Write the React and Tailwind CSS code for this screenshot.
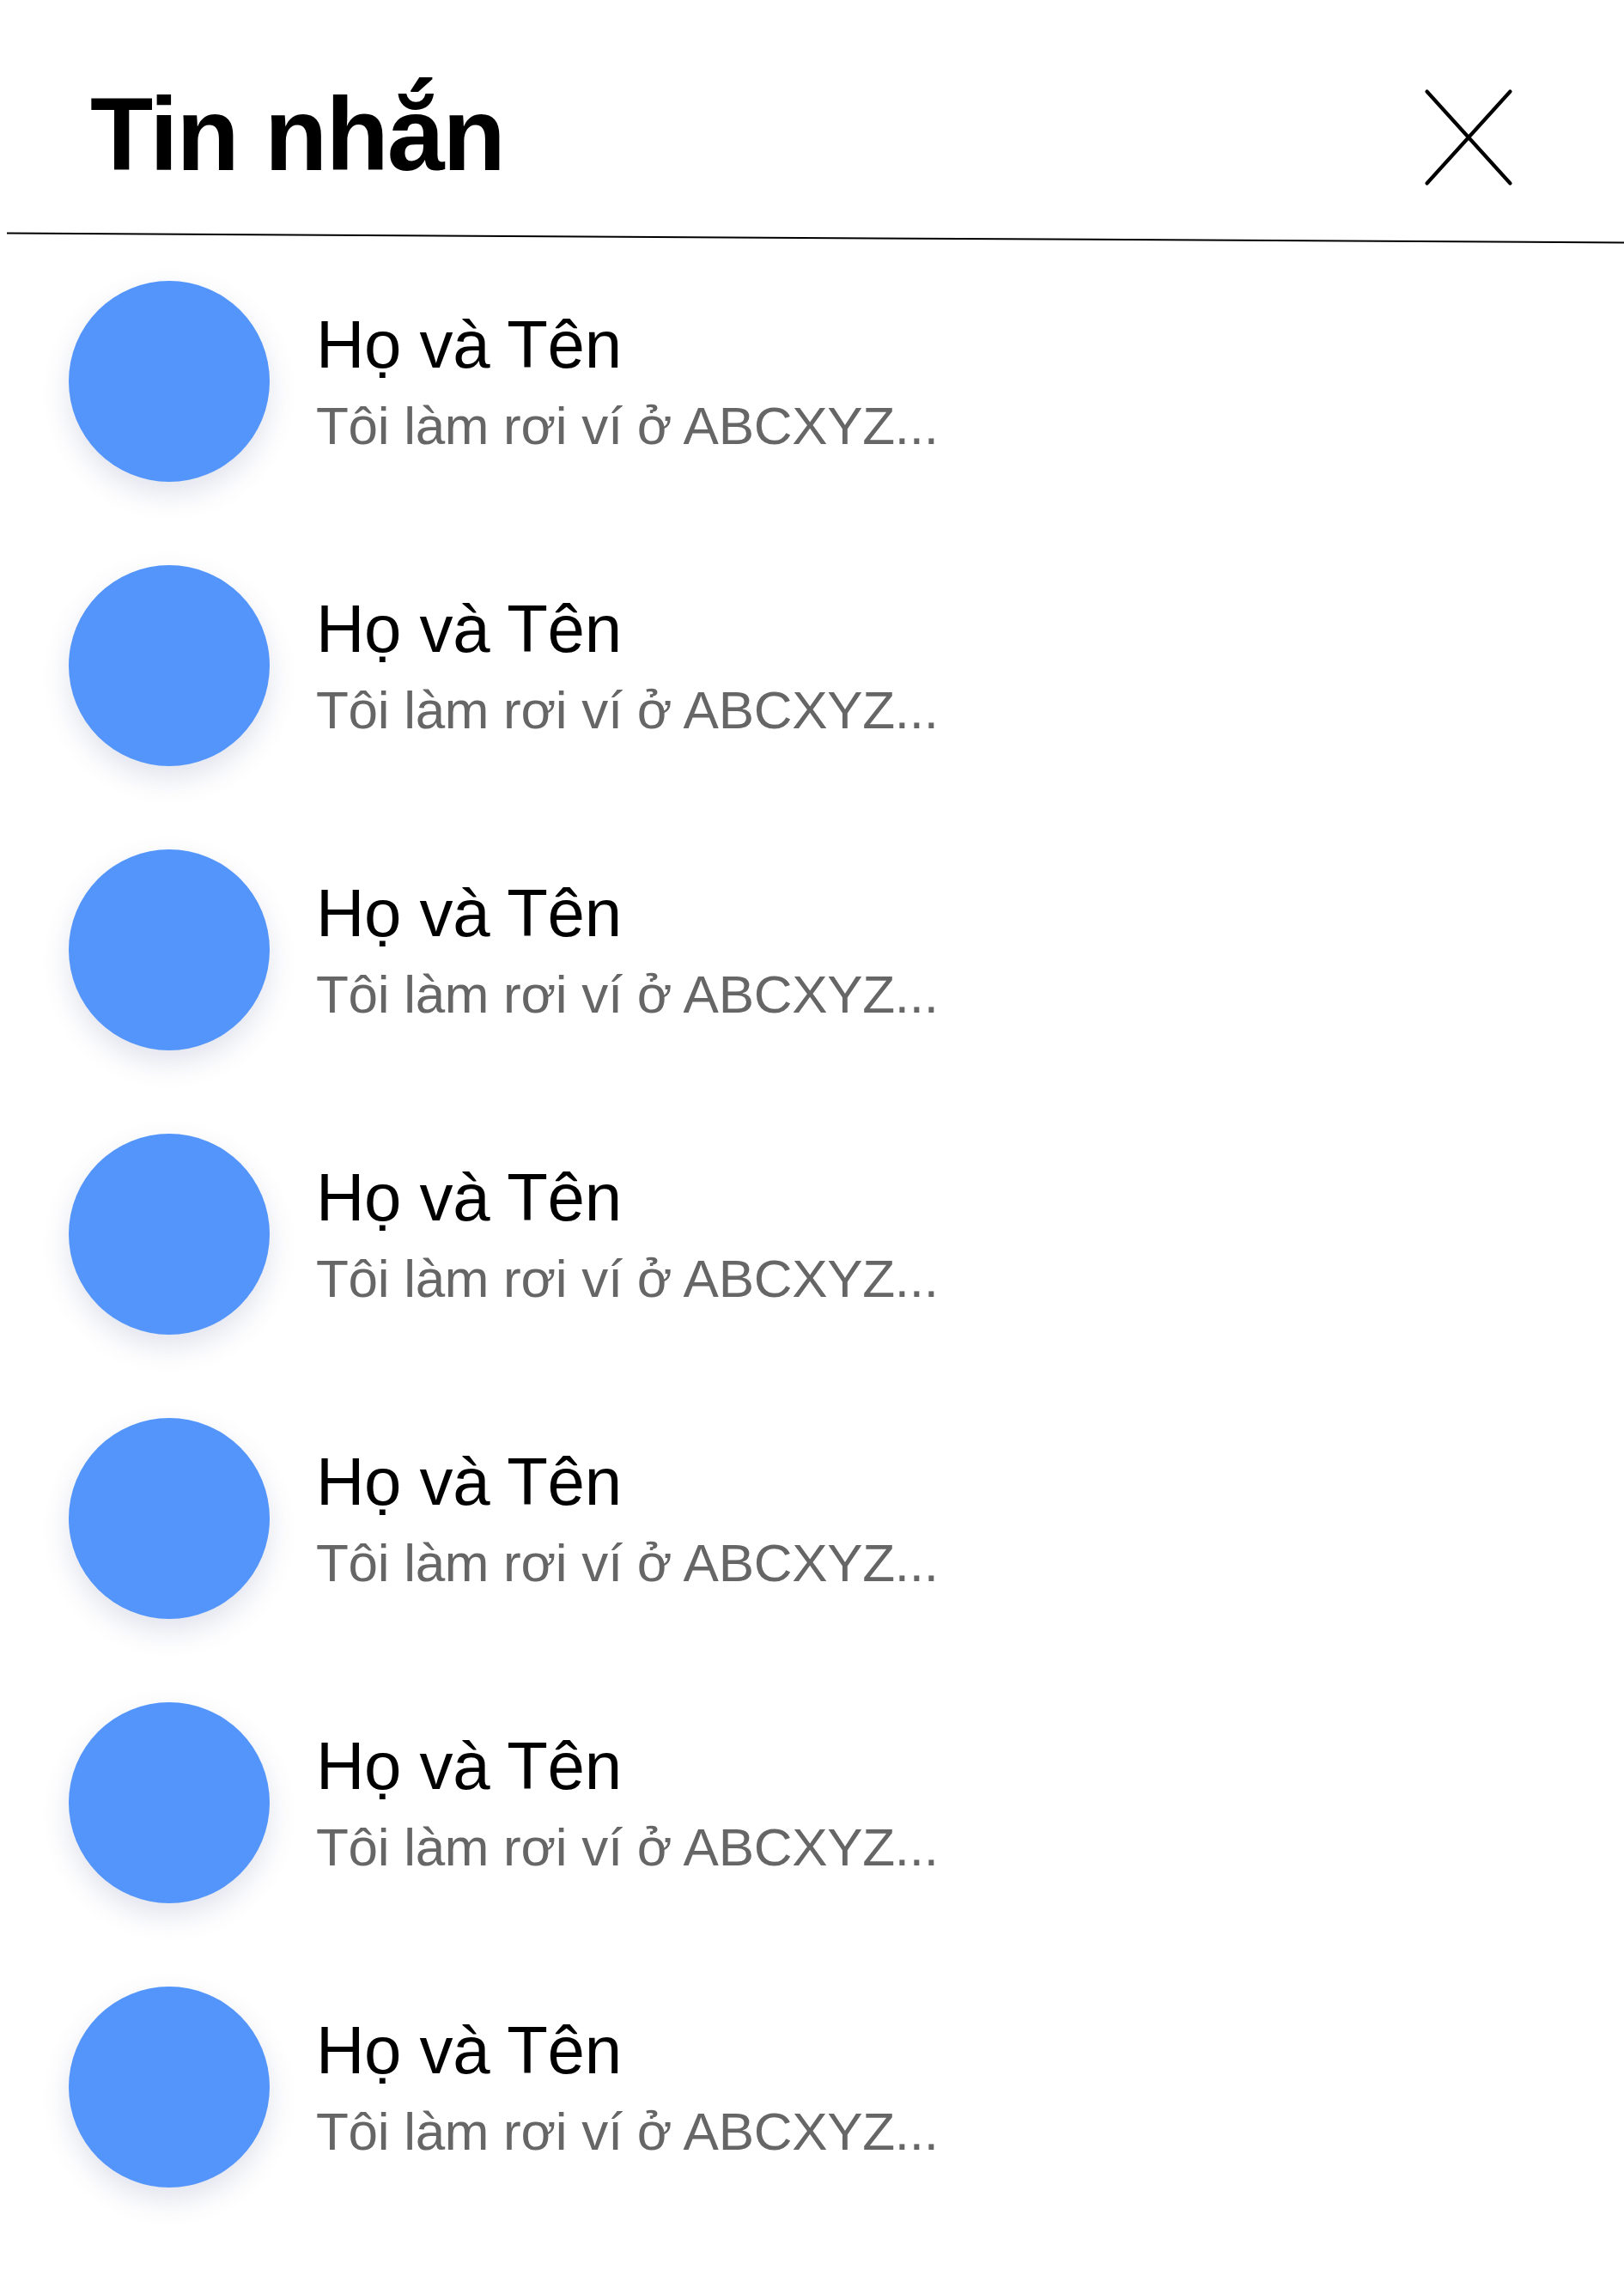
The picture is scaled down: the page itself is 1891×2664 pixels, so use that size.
import React from 'react';

// Danh sách tin nhắn — header + rows
const threads = Array.from({ length: 7 }, (_, i) => ({
  id: i,
  name: 'Họ và Tên',
  preview: 'Tôi làm rơi ví ở ABCXYZ...',
}));

function CloseIcon() {
  return (
    <svg width="104" height="114" viewBox="0 0 104 114" fill="none">
      <path d="M3.5 3.5 L100.5 110.5 M100.5 3.5 L3.5 110.5"
        stroke="#000" strokeWidth="4.2" strokeLinecap="round"/>
    </svg>
  );
}

export default function App() {
  return (
    <div className="min-h-[2664px] bg-white font-['Liberation_Sans',Arial,sans-serif]">
      {/* Header */}
      <div className="h-[276px] pt-[36px] flex items-center justify-between pl-[105px] pr-[129px]">
        <h1 className="text-[120px] leading-[120px] font-bold tracking-[-2px] text-black">
          Tin nhắn
        </h1>
        <button className="mt-[8px]">
          <CloseIcon/>
        </button>
      </div>

      {/* Divider */}
      <div className="ml-2 h-[2px] bg-black rotate-[0.33deg]"/>

      {/* Rows */}
      <ul>
        {threads.map(t => (
          <li key={t.id} className="h-[331px] flex items-center gap-[54px] pl-[80px]">
            <div className="w-[234px] h-[234px] rounded-full bg-[#5395FA] shadow-[0_14px_32px_rgba(70,80,140,0.16)] shrink-0"/>
            <div className="flex flex-col">
              <span className="text-[78px] leading-[90px] tracking-[-0.3px] text-black">
                {t.name}
              </span>
              <span className="text-[62px] leading-[72px] mt-[14px] tracking-[-0.3px] text-[#666]">
                {t.preview}
              </span>
            </div>
          </li>
        ))}
      </ul>
    </div>
  );
}
